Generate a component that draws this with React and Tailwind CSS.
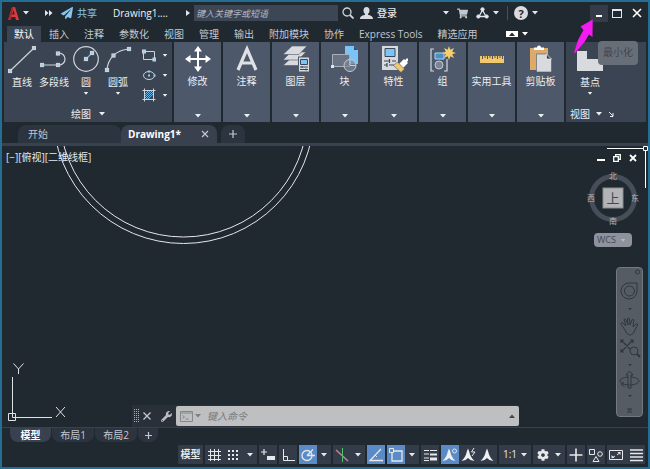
import React, { useState } from "react";
import { FaCog, FaPaperPlane, FaShoppingCart, FaWrench } from "react-icons/fa";

const menuTabs = [
  "默认",
  "插入",
  "注释",
  "参数化",
  "视图",
  "管理",
  "输出",
  "附加模块",
  "协作",
  "Express Tools",
  "精选应用",
];

// Small triangle used by every drop-down
function Caret({ className = "" }) {
  return (
    <svg viewBox="0 0 6 4" className={`h-1 w-1.5 shrink-0 ${className}`}>
      <path d="M0 0h6L3 3.6z" fill="currentColor" />
    </svg>
  );
}

// Blue grip point
function Grip({ x, y }) {
  return <rect x={x - 1.5} y={y - 1.5} width="3" height="3" fill="#8fd0f7" />;
}

function TitleBar() {
  return (
    <header className="flex h-[22px] items-center pr-1.5 pl-1.5 text-[#e3e7ec]">
      <button aria-label="应用程序菜单" className="flex items-center gap-1">
        <svg viewBox="0 0 11 13" className="h-[13px] w-[11px]">
          <path d="M0 13 4 0h3l4 13H8L7.3 10H3.5L2.7 13zM4.2 7.5h2.5L5.5 3z" fill="#e0393c" />
          <path d="M0 13 4 0h1.5L2.7 13z" fill="#a8262c" />
        </svg>
        <Caret />
      </button>
      <button aria-label="快速访问工具栏" className="ml-4">
        <svg viewBox="0 0 8 6" className="h-1.5 w-2" fill="currentColor">
          <path d="M0 0l3.500 3L0 6zM4 0l3.500 3L4 6z" />
        </svg>
      </button>
      <button className="ml-2 flex items-center gap-1 text-[10px] text-[#86c5ee]">
        <FaPaperPlane className="size-3" />
        共享
      </button>
      <span className="ml-4 text-[10px] text-[#f0f2f4]">Drawing1....</span>
      <svg viewBox="0 0 4 6" className="ml-[18px] h-1.5 w-1" fill="currentColor">
        <path d="M0 0l4 3-4 3z" />
      </svg>
      <input
        aria-label="搜索"
        placeholder="键入关键字或短语"
        className="ml-1 h-4 w-36 bg-[#3d4655] px-0.5 text-[9px] italic outline-none placeholder:text-[#b4bac3]"
      />
      <button aria-label="查找" className="ml-1">
        <svg viewBox="0 0 12 12" className="size-3" fill="none" stroke="#cfd3d8">
          <circle cx="5" cy="5" r="4" strokeWidth="1.3" />
          <path d="M8 8l3.5 3.5" strokeWidth="1.8" />
        </svg>
      </button>
      <button className="ml-1.5 flex items-center gap-1 text-[10px] font-medium">
        <svg viewBox="0 0 13 12" className="h-3 w-[13px]" fill="#d8dbdf">
          <ellipse cx="6.5" cy="3.5" rx="3" ry="3.5" />
          <path d="M5 6h3v1.800c2 .7 5 1 5 4.200H0C0 8.800 3 8.500 5 7.800z" />
        </svg>
        登录
      </button>
      <div className="ml-auto flex items-center">
        <Caret />
        <button aria-label="购物车" className="ml-2">
          <FaShoppingCart className="size-[11px] text-[#c3c7cc]" />
        </button>
        <button aria-label="应用程序" className="ml-2 flex items-center gap-1">
          <svg viewBox="0 0 13 12" className="h-3 w-[13px]" fill="#e3e7ec" stroke="#e3e7ec">
            <path d="M6.5 3 3 9.500h7z" fill="none" strokeWidth="1.3" />
            <circle cx="6.5" cy="2.3" r="1.6" />
            <circle cx="2.3" cy="9.5" r="1.6" />
            <circle cx="10.7" cy="9.5" r="1.6" />
          </svg>
          <Caret />
        </button>
        <span className="ml-2 h-3.5 w-px bg-[#4a515c]" />
        <button aria-label="帮助" className="ml-1.5 flex items-center gap-1">
          <span className="flex size-3.5 items-center justify-center rounded-full bg-[#d9dbde] text-[11px] leading-none font-bold text-[#1f2730]">
            ?
          </span>
          <Caret />
        </button>
        <div className="relative ml-[52px]">
          <button
            aria-label="最小化"
            className="flex h-[17px] w-[18px] items-center justify-center bg-[#353c47] pt-1.5"
          >
            <span className="h-0.5 w-1.5 bg-white" />
          </button>
          {/* pointer and tooltip of the minimize button */}
          <svg
            viewBox="0 0 20 35"
            className="absolute top-3.5 -left-4 z-20 h-[35px] w-5"
            fill="#f31bef"
          >
            <path d="M18.7 .5 6.5 7.5 9.500 11 4 21 0 34 1 34 10.500 23 15 15.500 18.500 18z" />
          </svg>
          <div
            role="tooltip"
            className="absolute top-9 left-2 z-10 flex h-6 w-10 items-center justify-center rounded-sm bg-[#686e78] text-[10px] text-[#3f454f]"
          >
            最小化
          </div>
        </div>
        <button aria-label="最大化" className="ml-1 h-[9px] w-2.5 border border-t-2 border-[#e3e7ec]" />
        <button aria-label="关闭" className="ml-2.5">
          <svg viewBox="0 0 10 10" className="size-2.5" stroke="#fff" strokeWidth="1.6">
            <path d="M1 1l8 8M9 1L1 9" />
          </svg>
        </button>
      </div>
    </header>
  );
}

function MenuBar() {
  const [active, setActive] = useState("默认");
  return (
    <nav className="flex h-[18px] items-center gap-px pt-0.5 pl-[5px] text-[10px] text-[#c3c8cf]">
      {menuTabs.map((tab) => (
        <button
          key={tab}
          onClick={() => setActive(tab)}
          className={`h-4 px-[7px] leading-4 whitespace-nowrap ${
            tab === active ? "bg-[#3b4453] text-white" : ""
          }`}
        >
          {tab}
        </button>
      ))}
      <button aria-label="最小化功能区" className="ml-5 flex items-center gap-1 text-white">
        <span className="flex h-1.5 w-3 items-center justify-center bg-white">
          <Caret className="h-0.5 w-1 rotate-180 text-[#1f2730]" />
        </span>
        <Caret />
      </button>
    </nav>
  );
}

function DrawTool({ label, caret, children }) {
  return (
    <button className="flex w-8 flex-col items-center">
      <svg viewBox="0 0 28 28" className="size-7" fill="none" stroke="#cfd3d8" strokeWidth="1.2">
        {children}
      </svg>
      <span className="mt-0.5 text-[10px] leading-3 whitespace-nowrap">{label}</span>
      {caret && <Caret className="mt-1 h-[3px] w-1" />}
    </button>
  );
}

function DrawPanel() {
  return (
    <section className="flex w-[168px] flex-col justify-between bg-[#3b4453]">
      <div className="flex pt-1 pl-0.5">
        <DrawTool label="直线">
          <path d="M2 25 26 2" />
          <Grip x={2} y={25} />
          <Grip x={26} y={2} />
        </DrawTool>
        <DrawTool label="多段线">
          <path d="M2 19h17a6 6 0 0 0 0-12h-1" />
          <Grip x={2} y={19} />
          <Grip x={18} y={19} />
          <Grip x={18} y={7.5} />
        </DrawTool>
        <DrawTool label="圆" caret>
          <circle cx="14" cy="13" r="12.3" />
          <path d="M14 13l6-6" stroke="#6db8ea" />
          <Grip x={14} y={13} />
          <Grip x={20} y={7} />
        </DrawTool>
        <DrawTool label="圆弧" caret>
          <path d="M3 24C4 12 12 4 25 3" />
          <Grip x={3} y={24} />
          <Grip x={9.5} y={9.5} />
          <Grip x={25} y={3} />
        </DrawTool>
        <div className="flex flex-col gap-1.5 pt-0.5 pl-2">
          <button aria-label="矩形" className="flex items-center gap-1.5">
            <svg viewBox="0 0 14 14" className="size-3.5" fill="none" stroke="#cfd3d8">
              <path d="M1.5 3.500h11v8h-11z" />
              <Grip x={2} y={3.5} />
              <Grip x={12.5} y={11.5} />
            </svg>
            <Caret className="h-[3px] w-1" />
          </button>
          <button aria-label="椭圆" className="flex items-center gap-1.5">
            <svg viewBox="0 0 14 14" className="size-3.5" fill="none" stroke="#cfd3d8">
              <ellipse cx="7" cy="7.5" rx="5.5" ry="4" />
              <rect x="6" y="6.5" width="2" height="2" fill="#8fd0f7" stroke="none" />
              <rect x="6" y="2.5" width="2" height="2" fill="#8fd0f7" stroke="none" />
              <rect x="11.5" y="6.5" width="2" height="2" fill="#8fd0f7" stroke="none" />
            </svg>
            <Caret className="h-[3px] w-1" />
          </button>
          <button aria-label="图案填充" className="flex items-center gap-1.5">
            <svg viewBox="0 0 14 14" className="size-3.5" fill="none" stroke="#cfd3d8">
              <path d="M3 10l7-7M3 6l3-3M6 11l5-5M3 8l5-5M4 11l7-7" stroke="#6db8ea" />
              <path d="M.5 2.500h13M.5 11.500h13M2.5.5v13M11.5.5v13" />
            </svg>
            <Caret className="h-[3px] w-1" />
          </button>
        </div>
      </div>
      <button className="mb-0.5 flex items-center justify-center gap-2 text-[10px] leading-3">
        绘图
        <Caret />
      </button>
    </section>
  );
}

function ToolPanel({ label, children }) {
  return (
    <button className="flex w-[47px] flex-col items-center bg-[#4d586a] pt-[3px] pb-1">
      <svg viewBox="0 0 28 28" className="size-7">
        {children}
      </svg>
      <span className="mt-0.5 text-[10px] leading-3 whitespace-nowrap">{label}</span>
      <Caret className="mt-auto" />
    </button>
  );
}

function Ribbon() {
  return (
    <div className="flex h-20 gap-0.5 px-0.5 text-[#eceef1]">
      <DrawPanel />
      <ToolPanel label="修改">
        <path
          d="M14 1l4 5.500h-3v6.500h6.500v-3L27 14l-5.500 4v-3H15v6.500h3L14 27l-4-5.500h3V15H6.500v3L1 14l5.500-4v3H13V6.500h-3z"
          fill="#fff"
        />
      </ToolPanel>
      <ToolPanel label="注释">
        <path d="M5 25 14 4l9 21M8.500 18h11" fill="none" stroke="#dfe1e4" strokeWidth="3.2" />
      </ToolPanel>
      <ToolPanel label="图层">
        <g fill="#d8dadd" stroke="#4d586a" strokeWidth=".6">
          <path d="M1 20.500 9 13h15l-8 7.500z" />
          <path d="M1 15 9 7h15l-8 8z" />
          <path d="M1 9.500 10 1h15l-8 8.500z" />
        </g>
        <rect x="16.5" y="12" width="11" height="15" fill="#d8dadd" stroke="#4d586a" />
        <path d="M18.500 14.500h7v5h-7z" fill="#7cc4f5" stroke="#38485a" />
        <path d="M18 22h8M18 24.500h8M20 21v2M24 23.500v2" stroke="#38485a" />
      </ToolPanel>
      <ToolPanel label="块">
        <path d="M14 1h9l4 4v14H14z" fill="#7cc4f5" />
        <path d="M23 1v4h4z" fill="#2b4f6c" />
        <path d="M1.500 9.500h17v12h-17z" fill="#697384" stroke="#aab0b9" />
        <circle cx="19" cy="20.5" r="6" fill="#7b8494" fillOpacity=".7" stroke="#c7cbd1" />
        <path d="M19 14.500v6h6" fill="none" stroke="#c7cbd1" />
        <rect x="0" y="20" width="3" height="3" fill="#cfe9fb" />
      </ToolPanel>
      <ToolPanel label="特性">
        <path d="M2 1h16v24H2z" fill="#d8dadd" />
        <path d="M5 3.500h10v8H5z" fill="#7cc4f5" stroke="#38485a" />
        <path d="M4 16h6M12 16h4M4 20h3M9 20h5M9.500 14v4M7 18v4" stroke="#38485a" strokeWidth="1.2" />
        <path d="M24 18l4-4" stroke="#fff" strokeWidth="2.5" />
        <path d="M19 19l5-5 4 4-5 5z" fill="#fff" />
        <path d="M13.500 20.500l4-3.500 7 7-3.500 3.500z" fill="#f0c86e" stroke="#4d586a" strokeWidth=".6" />
      </ToolPanel>
      <ToolPanel label="组">
        <path d="M5 4H2v22h3M15 26h3V14" fill="none" stroke="#d8dadd" strokeWidth="1.2" />
        <path d="M6 8h9v6H6z" fill="#4a90c4" stroke="#a9d6f4" />
        <circle cx="10" cy="20" r="4" fill="#7b8494" stroke="#c7cbd1" />
        <path
          d="M20 1l1.300 3.800 3.700-1.800-1.800 3.700L27 8l-3.800 1.300 1.800 3.700-3.700-1.800L20 15l-1.300-3.800-3.700 1.800 1.800-3.700L13 8l3.800-1.300L15 3l3.700 1.800z"
          fill="#f5cf6c"
        />
      </ToolPanel>
      <ToolPanel label="实用工具">
        <path d="M2 11h24v7H2z" fill="#f0c86e" />
        <path d="M4.500 11v3M7 11v2M9.500 11v3M12 11v2M14.500 11v3M17 11v2M19.500 11v3M22 11v2M24.500 11v3" stroke="#5c5646" />
      </ToolPanel>
      <ToolPanel label="剪贴板">
        <path d="M3 3h18v22H3z" fill="#dcaa69" />
        <path d="M7 5V2.500h3a2 2 0 0 1 4 0h3V5z" fill="#fff" />
        <path d="M9.500 9h10l5 5v13h-15z" fill="#d8dadd" stroke="#4d586a" strokeWidth=".6" />
        <path d="M19.500 9v5h5z" fill="#3b4453" stroke="#fff" strokeWidth=".6" />
      </ToolPanel>
      <section className="flex flex-1 flex-col justify-between bg-[#3b4453] pb-0.5 pl-1">
        <button className="flex w-10 flex-col items-center pt-1">
          <svg viewBox="0 0 28 28" className="size-7">
            <path d="M1 5h10v8h16v12H1z" fill="#d8dadd" />
          </svg>
          <span className="mt-0.5 text-[10px] leading-3">基点</span>
          <Caret className="mt-1 h-[3px] w-1" />
        </button>
        <button className="flex items-center gap-1.5 text-[10px] leading-3">
          视图
          <Caret />
          <svg viewBox="0 0 6 6" className="size-1.5" fill="none" stroke="currentColor">
            <path d="M1 1l4 4M5 2v3.500H2" />
          </svg>
        </button>
      </section>
    </div>
  );
}

function FileTabs() {
  return (
    <div className="flex items-end border-b-[3px] border-[#39414e] pt-[3px] pl-4 text-[10px] text-[#c3c8cf]">
      <button className="h-[18px] w-[103px] rounded-tl-lg rounded-tr-lg bg-[#2c343f] pl-2.5 text-left leading-[18px]">
        开始
      </button>
      <div className="flex h-[18px] w-24 items-center justify-between rounded-tl-lg rounded-tr-lg bg-[#39414e] pr-2 pl-[7px] font-bold text-white">
        <button>Drawing1*</button>
        <button aria-label="关闭图形">
          <svg viewBox="0 0 8 8" className="size-2" stroke="#c3c8cf" strokeWidth="1.2">
            <path d="M1 1l6 6M7 1L1 7" />
          </svg>
        </button>
      </div>
      <button
        aria-label="新图形"
        className="ml-1 flex h-[18px] w-6 items-center justify-center rounded-tl-lg rounded-tr-lg bg-[#2c343f]"
      >
        <svg viewBox="0 0 8 8" className="size-2" stroke="#c3c8cf" strokeWidth="1.2">
          <path d="M4 0v8M0 4h8" />
        </svg>
      </button>
    </div>
  );
}

function ViewCube() {
  return (
    <div className="absolute top-6 right-[7px] flex flex-col items-center text-[#a9adb3]">
      <svg viewBox="0 0 56 56" className="size-14">
        <circle cx="28" cy="28" r="21.5" fill="none" stroke="#454e59" strokeWidth="5" />
        <rect x="18" y="18" width="20" height="20" fill="#b2b4b5" stroke="#8b8e91" />
        <g fontSize="8" textAnchor="middle" fill="#b4b8bd">
          <text x="28" y="9">北</text>
          <text x="28" y="54">南</text>
          <text x="6" y="31">西</text>
          <text x="50" y="31">东</text>
        </g>
        <text x="28" y="33" fontSize="13" textAnchor="middle" fill="#44484c">上</text>
      </svg>
      <button className="mt-[7px] flex h-3.5 w-[38px] items-center gap-1 rounded bg-[#8d929c] pl-[3px] text-[9px] text-[#454b57]">
        WCS
        <Caret className="h-[3px] w-1.5 text-[#b7bac1]" />
      </button>
    </div>
  );
}

function NavBar() {
  return (
    <div className="absolute top-[121px] right-[5px] h-[150px] w-[27px] rounded-sm border border-[#747980] bg-[#565c64]">
      <svg viewBox="0 0 25 148" className="h-[148px] w-[25px]" fill="none" stroke="#30363e">
        <circle cx="20.5" cy="4" r="2" />
        <path d="M12 15h8v8a8 8 0 1 1-8-8z" />
        <circle cx="12.5" cy="23" r="5" />
        <path d="M11 40h4l-2 2zM11 96h4l-2 2zM11 127h4l-2 2z" fill="#30363e" stroke="none" />
        <path d="M8 62 4 56c-.5-1.500 1-2 2-1l3 3-2-6c0-1.500 1.500-1.500 2 0l2 5-.5-6c.3-1.300 1.800-1.300 2 0l.5 6 2-5c.7-1.200 2-.8 1.800.5L16 59l3-3c1-.8 2 0 1.500 1L18 62c-1 3-3 5-5 5s-4-2-5-5z" />
        <path d="M4 72l12 12M16 72 4 84M4 75v-3h3M13 72h3v3M4 81v3h3" strokeWidth="1.2" />
        <circle cx="17" cy="83" r="4" fill="#565c64" />
        <path d="M20 86l3 3" strokeWidth="2" />
        <path d="M11 107h-2l3.500-4 3.500 4h-2v13h-3z" />
        <path d="M11 109c-5 .5-8 2-8 4 0 2.500 5 4 9.500 4s9.500-1.500 9.500-4c0-2-3-3.500-8-4M7 114l-3 2.500 3.500 2" />
        <path d="M10 141h5M10 144h5M11 142h3" />
      </svg>
    </div>
  );
}

function CommandLine() {
  return (
    <div className="absolute right-[129px] bottom-0 left-[130px] flex h-[22px] items-center bg-[#2a303a]">
      <svg viewBox="0 0 5 14" className="ml-0.5 h-3.5 w-[5px]" stroke="#a9adb3" strokeDasharray="1 1">
        <path d="M.5 0v14M2.5 0v14M4.5 0v14" />
      </svg>
      <button aria-label="关闭命令行" className="ml-1">
        <svg viewBox="0 0 8 8" className="size-2" stroke="#c3c8cf" strokeWidth="1.3">
          <path d="M.5.5l7 7M7.5.5l-7 7" />
        </svg>
      </button>
      <button aria-label="自定义" className="ml-2.5">
        <FaWrench className="size-[11px] text-[#b9bdc3]" />
      </button>
      <div className="ml-1 flex h-5 flex-1 items-center rounded-xs bg-[#bebfc0] px-1 text-[#7b7e82]">
        <svg viewBox="0 0 13 11" className="h-[11px] w-[13px]" fill="none" stroke="#85888b">
          <path d="M.5.5h12v10H.5zM.5 2h12M2.500 4.500l2 1.500-2 1.500M5.500 8h3" />
        </svg>
        <Caret className="ml-0.5" />
        <input
          aria-label="命令"
          placeholder="键入命令"
          className="ml-1.5 min-w-0 flex-1 text-[10px] italic outline-none placeholder:text-[#77797c]"
        />
        <Caret className="rotate-180 text-[#44484c]" />
      </div>
    </div>
  );
}

function DrawingArea() {
  return (
    <main className="relative min-h-[281px] flex-1 overflow-hidden border-b border-[#39414e]">
      <svg className="absolute inset-0 h-full w-full" fill="none" stroke="#e6e8ea">
        <circle cx="181.5" cy="-33" r="130.5" />
        <circle cx="181.5" cy="-33" r="124" />
      </svg>
      <p className="relative pt-1 pl-1 text-[10px] leading-3.5 text-[#e6e8ea]">[−][俯视][二维线框]</p>
      <div className="absolute top-2 right-[11px] flex items-center gap-2 text-white">
        <button aria-label="最小化视口" className="mt-1 h-0.5 w-2 bg-white" />
        <button aria-label="还原视口">
          <svg viewBox="0 0 8 8" className="size-2" fill="none" stroke="#fff" strokeWidth="1.3">
            <path d="M.7 2.700h4.600v4.600H.7zM2.700 2.500V.7h4.600v4.600H5.500" />
          </svg>
        </button>
        <button aria-label="关闭视口">
          <svg viewBox="0 0 8 8" className="size-2" stroke="#fff" strokeWidth="1.8">
            <path d="M1 1l6 6M7 1L1 7" />
          </svg>
        </button>
      </div>
      {/* cursor in the corner of the viewport */}
      <svg viewBox="0 0 42 43" className="absolute top-0 right-0 h-[43px] w-[42px]" fill="none" stroke="#fff">
        <path d="M1 2.500h36M39.500 5v37M37.500.5h4v4h-4z" />
      </svg>
      <ViewCube />
      <NavBar />
      {/* UCS icon */}
      <svg
        viewBox="0 0 60 64"
        className="absolute bottom-px left-1.5 h-16 w-[60px]"
        fill="none"
        stroke="#dfe1e4"
      >
        <path d="M.5 51.500h7v7h-7zM4.500 15v40.500H44" />
        <path d="M5.500 1.500 10.500 7l5-5.500M10.500 7v5M48 45l9 10M57 45l-9 10" />
      </svg>
      <CommandLine />
    </main>
  );
}

function LayoutTabs() {
  return (
    <div className="flex gap-px pl-2 text-[10px] text-[#c3c8cf]">
      <button className="h-3.5 w-[41px] rounded-br-lg rounded-bl-lg bg-[#39414e] leading-3.5 font-bold text-white">
        模型
      </button>
      <button className="h-3.5 w-[42px] rounded-br-lg rounded-bl-lg bg-[#2c343f] leading-3.5">布局1</button>
      <button className="h-3.5 w-[42px] rounded-br-lg rounded-bl-lg bg-[#2c343f] leading-3.5">布局2</button>
      <button
        aria-label="新建布局"
        className="flex h-3.5 w-5 items-center justify-center rounded-br-lg rounded-bl-lg bg-[#2c343f]"
      >
        <svg viewBox="0 0 8 8" className="size-[7px]" stroke="#c3c8cf" strokeWidth="1.4">
          <path d="M4 0v8M0 4h8" />
        </svg>
      </button>
    </div>
  );
}

function StatusButton({ label, active, children }) {
  return (
    <button
      aria-label={label}
      className={`flex h-[19px] w-[18px] items-center justify-center ${
        active ? "bg-[#5a8bc6]" : "bg-[#343c49]"
      }`}
    >
      <svg viewBox="0 0 16 16" className="size-4" fill="none" stroke="#e6e8ea">
        {children}
      </svg>
    </button>
  );
}

function StatusCaret({ label }) {
  return (
    <button aria-label={label} className="flex h-[19px] w-3.5 items-center justify-center bg-[#343c49]">
      <Caret />
    </button>
  );
}

// Body of the annotation scale icons
function ScaleMark() {
  return (
    <path
      d="M7 1.500c1 2 1.500 4 2 6 1 2.500 2.500 4.500 4.500 6.500l-4-1L7 11l-2.500 2-4 1C2.500 12 4 10 5 7.500c.5-2 1-4 2-6z"
      fill="#eef0f2"
      stroke="none"
    />
  );
}

function StatusBar() {
  return (
    <footer className="flex items-center justify-end gap-0.5 pt-[3px] pr-[3px] pb-[3px] text-[10px] text-[#e6e8ea]">
      <button className="h-[19px] w-[25px] bg-[#343c49] font-bold">模型</button>
      <div className="flex gap-px bg-[#343c49]">
        <StatusButton label="栅格">
          <path d="M4.500 2v12M8.500 2v12M12.500 2v12M2 4.500h13M2 8.500h13M2 12.500h13" />
        </StatusButton>
        <StatusButton label="捕捉">
          <path
            d="M3 4h11M3 8h11M3 12h11"
            strokeDasharray="2 2"
            strokeWidth="2"
          />
        </StatusButton>
        <StatusCaret label="捕捉设置" />
      </div>
      <StatusButton label="动态输入">
        <path d="M1 5h6M4 2v6" strokeWidth="1.2" />
        <path d="M7 9h8v4H7z" fill="#e6e8ea" stroke="none" />
      </StatusButton>
      <StatusButton label="正交">
        <path d="M3.500 2v11.500H15M3.500 9.500h4v4" />
      </StatusButton>
      <div className="flex">
        <StatusButton label="极轴追踪" active>
          <circle cx="7" cy="8.5" r="5" strokeWidth="1.3" />
          <path d="M7 8.500h8M7 8.500l6-6" strokeWidth="1.3" />
        </StatusButton>
        <StatusCaret label="极轴设置" />
      </div>
      <div className="flex">
        <StatusButton label="等轴测草图">
          <path d="M2 3l12 11" stroke="#c58a94" strokeWidth="1.3" />
          <path d="M8.500 1v14" stroke="#4fc26d" />
        </StatusButton>
        <StatusCaret label="等轴测设置" />
      </div>
      <StatusButton label="对象捕捉追踪" active>
        <path d="M13 2 2 13.500h13" strokeWidth="1.3" />
        <path d="M7 8l2 2" />
      </StatusButton>
      <div className="flex">
        <StatusButton label="对象捕捉" active>
          <path d="M4 4h10v10H4z" strokeWidth="1.3" />
          <path d="M1.500 1.500h4v4h-4z" fill="#5a8bc6" />
        </StatusButton>
        <StatusCaret label="对象捕捉设置" />
      </div>
      <StatusButton label="线宽">
        <path d="M2 3.500h5M8 3.500h7M2 7h5M2 11h5" />
        <path d="M8 7.500h7" strokeWidth="2" />
        <path d="M8 12h7" strokeWidth="3" />
        <path d="M2 13.500h5" />
      </StatusButton>
      <div className="flex gap-px bg-[#343c49]">
        <StatusButton label="注释可见性" active>
          <ScaleMark />
          <circle cx="12.5" cy="4" r="2" />
        </StatusButton>
        <StatusButton label="自动缩放">
          <ScaleMark />
          <path d="M13 1l-2.500 4H14l-3 4" />
        </StatusButton>
        <StatusButton label="注释比例">
          <ScaleMark />
        </StatusButton>
      </div>
      <button className="flex h-[19px] items-center gap-1 bg-[#343c49] px-1">
        1:1
        <Caret />
      </button>
      <button aria-label="切换工作空间" className="flex h-[19px] items-center gap-1.5 bg-[#343c49] px-1">
        <FaCog className="size-3" />
        <Caret />
      </button>
      <StatusButton label="注释监视器">
        <path d="M8 1.500v13M1.500 8h13" strokeWidth="1.6" />
      </StatusButton>
      <StatusButton label="隔离对象">
        <path d="M1.500 2.500h5v5h-5zM8 9.500l3 5H5z" />
        <circle cx="12" cy="7" r="2.3" />
      </StatusButton>
      <div className="flex gap-0.5 bg-[#343c49]">
        <StatusButton label="全屏显示">
          <path d="M1.500 3.500h13v9h-13zM9 8l3-2.500M7 9l-3 2" />
          <path d="M12.500 5v3l-3-3zM3.500 11V8l3 3z" fill="#e6e8ea" stroke="none" />
        </StatusButton>
        <StatusButton label="自定义">
          <path d="M2 3h13M2 6.500h13M2 10h13M2 13.500h13" strokeWidth="1.3" />
        </StatusButton>
      </div>
    </footer>
  );
}

function App() {
  return (
    <div className="flex min-h-screen flex-col border-2 border-[#256d92] bg-[#202830] font-['Open_Sans','Noto_Sans_CJK_SC',sans-serif]">
      <TitleBar />
      <MenuBar />
      <Ribbon />
      <FileTabs />
      <DrawingArea />
      <LayoutTabs />
      <StatusBar />
    </div>
  );
}

export default App;
